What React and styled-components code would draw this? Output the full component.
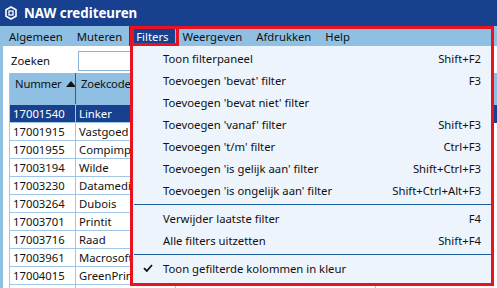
import React from 'react'
import styled, { createGlobalStyle } from 'styled-components'

const menus = ['Algemeen', 'Muteren', 'Filters', 'Weergeven', 'Afdrukken', 'Help']

const rows = [
  ['17001540', 'Linker'],
  ['17001915', 'Vastgoed'],
  ['17001955', 'Compimp'],
  ['17003194', 'Wilde'],
  ['17003230', 'Datamedi'],
  ['17003264', 'Dubois'],
  ['17003701', 'Printit'],
  ['17003716', 'Raad'],
  ['17003961', 'Macrosoft'],
  ['17004015', 'GreenPrint'],
  ['', ''],
]

const filterItems = [
  { label: 'Toon filterpaneel', key: 'Shift+F2' },
  { label: "Toevoegen 'bevat' filter", key: 'F3' },
  { label: "Toevoegen 'bevat niet' filter", key: '' },
  { label: "Toevoegen 'vanaf' filter", key: 'Shift+F3' },
  { label: "Toevoegen 't/m' filter", key: 'Ctrl+F3' },
  { label: "Toevoegen 'is gelijk aan' filter", key: 'Shift+Ctrl+F3' },
  { label: "Toevoegen 'is ongelijk aan' filter", key: 'Shift+Ctrl+Alt+F3' },
  { sep: true },
  { label: 'Verwijder laatste filter', key: 'F4' },
  { label: 'Alle filters uitzetten', key: 'Shift+F4' },
  { sep: true },
  { label: 'Toon gefilterde kolommen in kleur', key: '', checked: true },
]

const App = () => {
  return (
    <Window>
      <GlobalStyle />
      <TitleBar>
        <AppIcon width="12" height="14" viewBox="0 0 12 14">
          <polygon points="6,1 11,3.8 11,10.2 6,13 1,10.2 1,3.8" fill="none" stroke="#fff" strokeWidth="1.6" strokeLinejoin="round" />
          <rect x="4" y="5" width="4" height="4" fill="none" stroke="#fff" strokeWidth="1.3" />
        </AppIcon>
        <Title>NAW crediteuren</Title>
      </TitleBar>
      <MenuBar>
        {menus.map((m) => (
          <MenuItem key={m} $active={m === 'Filters'}>{m}</MenuItem>
        ))}
      </MenuBar>
      <Body>
        <Panel>
          <SearchRow>
            <SearchLabel>Zoeken</SearchLabel>
            <SearchInput />
          </SearchRow>
          <Grid>
            <HeaderRow>
              <HeaderCell $w={66}>
                <HeaderText>Nummer</HeaderText>
                <SortArrow width="10" height="6" viewBox="0 0 10 6">
                  <polygon points="0,6 5,0 10,6" fill="#111" />
                </SortArrow>
              </HeaderCell>
              <HeaderCell $w={100}>
                <HeaderText>Zoekcode</HeaderText>
              </HeaderCell>
              <HeaderCell $w={200}></HeaderCell>
            </HeaderRow>
            {rows.map((r, i) => (
              <Row key={i} $selected={i === 0}>
                <Cell $w={66}>{r[0]}</Cell>
                <Cell $w={100}>{r[1]}</Cell>
                <Cell $w={200}></Cell>
              </Row>
            ))}
          </Grid>
        </Panel>
      </Body>

      <Dropdown>
        {filterItems.map((it, i) =>
          it.sep ? (
            <Separator key={i} />
          ) : (
            <DropItem key={i}>
              <CheckCol>
                {it.checked && (
                  <svg width="10" height="8" viewBox="0 0 10 8">
                    <path d="M1 4.2 L3.8 7 L9 1" fill="none" stroke="#111" strokeWidth="1.8" />
                  </svg>
                )}
              </CheckCol>
              <ItemLabel>{it.label}</ItemLabel>
              <Shortcut>{it.key}</Shortcut>
            </DropItem>
          )
        )}
      </Dropdown>
      <Marker $x={130} $y={26} $w={364} $h={260} />
      <Marker $x={131} $y={26} $w={48} $h={20} />
    </Window>
  )
}

export default App

const GlobalStyle = createGlobalStyle`
  body {
    margin: 0;
    background: #fff;
  }
  * {
    box-sizing: border-box;
  }
`

const Window = styled.div`
  position: relative;
  width: 497px;
  height: 288px;
  overflow: hidden;
  display: flex;
  flex-direction: column;
  font-family: 'Noto Sans', sans-serif;
  font-size: 11.3px;
  color: #111;
  background: #8fc0e3;
`

const TitleBar = styled.div`
  height: 26px;
  flex-shrink: 0;
  display: flex;
  align-items: center;
  gap: 7px;
  padding-left: 5px;
  background: #17408e;
`

const AppIcon = styled.svg`
  display: block;
`

const Title = styled.span`
  color: #fff;
  font-weight: bold;
  font-size: 13.3px;
`

const MenuBar = styled.div`
  height: 20px;
  flex-shrink: 0;
  display: flex;
  padding-left: 2px;
  background: #8fc0e3;
`

const MenuItem = styled.div`
  display: flex;
  align-items: center;
  padding: 0 7px;
  background: ${(p) => (p.$active ? '#17408e' : 'transparent')};
  color: ${(p) => (p.$active ? '#fff' : '#111')};
`

const Body = styled.div`
  flex: 1;
  padding-left: 3px;
  display: flex;
`

const Panel = styled.div`
  flex: 1;
  background: #fff;
  padding-left: 6px;
`

const SearchRow = styled.div`
  height: 27px;
  display: flex;
  align-items: center;
  padding-top: 2px;
`

const SearchLabel = styled.span`
  width: 69px;
  padding-left: 2px;
`

const SearchInput = styled.div`
  width: 200px;
  height: 20px;
  border: 1px solid #8db4d8;
  background: #fff;
`

const Grid = styled.div`
  border-left: 1px solid #9fc6e6;
`

const HeaderRow = styled.div`
  display: flex;
  height: 32px;
  background: #8fc0e3;
  border-bottom: 1px solid #8fc0e3;
`

const HeaderCell = styled.div`
  width: ${(p) => p.$w}px;
  flex-shrink: 0;
  padding: 3px 0 0 5px;
  border-right: 1px solid #2a5f9e;
  display: flex;
  align-items: flex-start;
  gap: 4px;
  overflow: hidden;
`

const HeaderText = styled.span`
  letter-spacing: -0.2px;
`

const SortArrow = styled.svg`
  display: block;
  flex-shrink: 0;
  margin-top: 5px;
`

const Row = styled.div`
  display: flex;
  height: 18px;
  background: ${(p) => (p.$selected ? '#17408e' : '#fff')};
  color: ${(p) => (p.$selected ? '#fff' : '#111')};
`

const Cell = styled.div`
  width: ${(p) => p.$w}px;
  flex-shrink: 0;
  padding-left: 3px;
  line-height: 17px;
  border-right: 1px solid #9fc6e6;
  border-bottom: 1px solid #9fc6e6;
`

const Dropdown = styled.div`
  position: absolute;
  left: 131px;
  top: 46px;
  width: 363px;
  height: 240px;
  padding-top: 1px;
  background: #eef4fc;
`

const DropItem = styled.div`
  height: 22px;
  display: grid;
  grid-template-columns: 32px 1fr auto;
  align-items: center;
  padding-right: 13px;
`

const CheckCol = styled.div`
  display: flex;
  justify-content: center;
  padding-left: 2px;
`

const ItemLabel = styled.span``

const Shortcut = styled.span`
  text-align: right;
`

const Separator = styled.div`
  height: 1px;
  margin: 3px 0 2px 3px;
  background: #1e5fa0;
`

const Marker = styled.div`
  position: absolute;
  left: ${(p) => p.$x}px;
  top: ${(p) => p.$y}px;
  width: ${(p) => p.$w}px;
  height: ${(p) => p.$h}px;
  border: 3px solid #e8131f;
  pointer-events: none;
`
